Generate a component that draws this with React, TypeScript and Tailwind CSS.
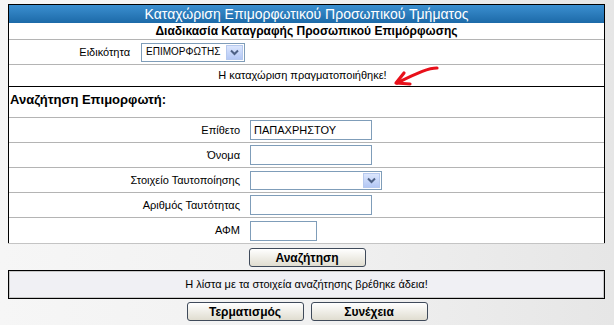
import React from 'react';

const ui = "font-['Liberation_Sans','Arial',sans-serif]";

function XpArrow() {
  return (
    <span className="flex h-full w-[17px] items-center justify-center border border-[#b6c9ee] bg-gradient-to-b from-[#dbe6fd] to-[#b4c8f5]">
      <svg width="9" height="7" viewBox="0 0 9 7">
        <path d="M1 1.5 L4.5 5 L8 1.5" fill="none" stroke="#4d6185" strokeWidth="2" />
      </svg>
    </span>
  );
}

function Select({ value, width }: { value?: string; width: string }) {
  return (
    <div className={`flex h-[19px] items-center border border-[#7f9db9] bg-white p-[1px] ${width}`}>
      <span className="flex-1 pl-[3px] text-[10px] leading-none text-black">{value}</span>
      <XpArrow />
    </div>
  );
}

function Input({ value, width }: { value?: string; width: string }) {
  return (
    <div className={`flex h-[20px] items-center border border-[#7f9db9] bg-white pl-[3px] text-[11px] text-black ${width}`}>
      {value}
    </div>
  );
}

function Button({ label }: { label: string }) {
  return (
    <button className="flex h-[19px] w-[117px] items-center justify-center rounded-[3px] border border-[#3f4a5a] bg-gradient-to-b from-white to-[#e0ddd0] text-[12px] font-bold leading-none text-black">
      {label}
    </button>
  );
}

const fields = [
  { label: 'Επίθετο', kind: 'input', value: 'ΠΑΠΑΧΡΗΣΤΟΥ', width: 'w-[122px]' },
  { label: 'Όνομα', kind: 'input', value: '', width: 'w-[122px]' },
  { label: 'Στοιχείο Ταυτοποίησης', kind: 'select', value: '', width: 'w-[132px]' },
  { label: 'Αριθμός Ταυτότητας', kind: 'input', value: '', width: 'w-[122px]' },
  { label: 'ΑΦΜ', kind: 'input', value: '', width: 'w-[67px]' },
];

export default function App() {
  return (
    <div className={`${ui} flex h-[325px] w-[614px] flex-col bg-gradient-to-r from-[#f6f6f6] via-[#f1f1f1] to-[#e6e6e6] pt-[4px]`}>
      <div className="ml-[8px] w-[597px] border border-b-0 border-black bg-white">
        <div className="flex h-[18px] items-center justify-center bg-gradient-to-b from-[#3b8fd0] to-[#1c6aa8] text-[14px] leading-none text-white">
          Καταχώριση Επιμορφωτικού Προσωπικού Τμήματος
        </div>
        <div className="flex h-[17px] items-center justify-center border-b border-[#b4b4b4] text-[12px] font-bold text-black">
          Διαδικασία Καταγραφής Προσωπικού Επιμόρφωσης
        </div>
        <div className="flex h-[25px] items-center border-b border-[#b4b4b4] text-[11px]">
          <span className="w-[122px] pr-[1px] text-right">Ειδικότητα</span>
          <span className="ml-[10px]">
            <Select value="ΕΠΙΜΟΡΦΩΤΗΣ" width="w-[104px]" />
          </span>
        </div>
        <div className="relative flex h-[22px] items-center justify-center border-b border-black text-[11px]">
          <span className="pr-[8px]">Η καταχώριση πραγματοποιήθηκε!</span>
          <svg className="absolute left-[382px] top-[0px]" width="48" height="22" viewBox="0 0 48 22">
            <path d="M46 3 C38 3 28 7 6 18" fill="none" stroke="#e8101a" strokeWidth="3.2" strokeLinecap="round" />
            <path d="M13 8 L5 18 L19 19" fill="none" stroke="#e8101a" strokeWidth="3.2" strokeLinecap="round" strokeLinejoin="round" />
          </svg>
        </div>
        <div className="flex h-[31px] items-start border-b border-[#b4b4b4] pt-[3px] pl-[1px] text-[13px] font-bold">
          Αναζήτηση Επιμορφωτή:
        </div>
        {fields.map((f, i) => (
          <div
            key={f.label}
            className={`flex h-[25px] items-center text-[11px] ${i < fields.length - 1 ? 'border-b border-[#b4b4b4]' : ''}`}
          >
            <span className="w-[231px] text-right">{f.label}</span>
            <span className="ml-[10px]">
              {f.kind === 'select' ? <Select width={f.width} /> : <Input value={f.value} width={f.width} />}
            </span>
          </div>
        ))}
      </div>
      <div className="ml-[8px] h-px w-[597px] bg-[#c4c4c4]" />
      <div className="mt-[4px] flex justify-center">
        <Button label="Αναζήτηση" />
      </div>
      <div className="ml-[8px] mt-[3px] w-[597px] border border-black">
        <div className="flex h-[27px] items-center justify-center border border-[#c8c8c8] bg-[#f0f0f4] text-[11px]">
          Η λίστα με τα στοιχεία αναζήτησης βρέθηκε άδεια!
        </div>
      </div>
      <div className="mt-[3px] flex justify-center gap-[7px]">
        <Button label="Τερματισμός" />
        <Button label="Συνέχεια" />
      </div>
    </div>
  );
}
